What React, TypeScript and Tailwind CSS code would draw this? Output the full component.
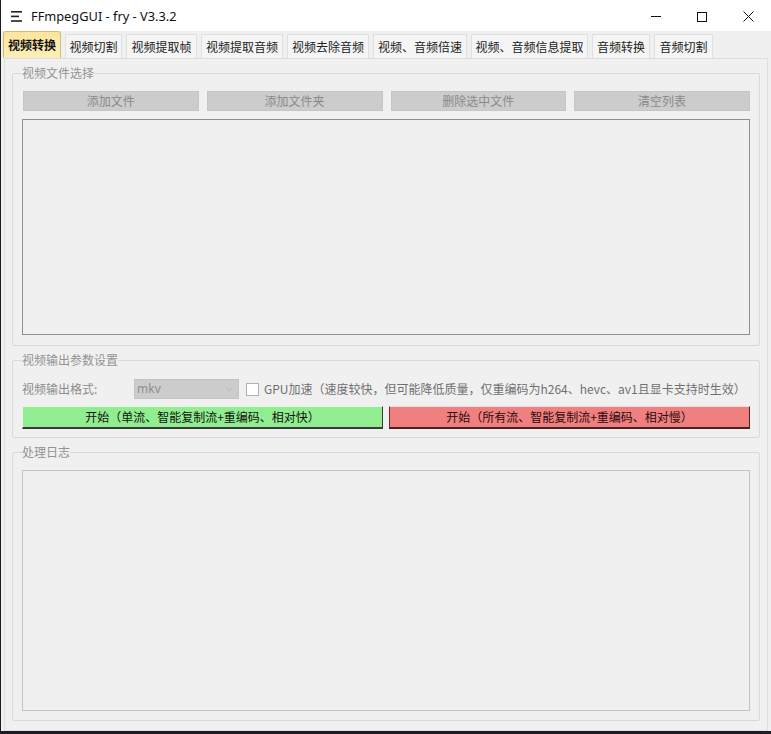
import { ChevronDown } from "lucide-react";

const tabs = [
    { name: "视频转换", w: "w-[58px]" },
    { name: "视频切割", w: "w-[57px]" },
    { name: "视频提取帧", w: "w-[71px]" },
    { name: "视频提取音频", w: "w-[82px]" },
    { name: "视频去除音频", w: "w-[82px]" },
    { name: "视频、音频倍速", w: "w-[94px]" },
    { name: "视频、音频信息提取", w: "w-[117px]" },
    { name: "音频转换", w: "w-[58px]" },
    { name: "音频切割", w: "w-[59px]" },
];

const fileButtons = ["添加文件", "添加文件夹", "删除选中文件", "清空列表"];

const GroupBox = ({ title, className, children }: { title: string; className?: string; children: React.ReactNode }) => (
    <fieldset className={`border border-[#d9d9d9] rounded-[2px] px-[9px] ${className ?? ""}`}>
        <legend className="px-0 text-[12px] leading-[14px] text-[#939393]">{title}</legend>
        {children}
    </fieldset>
);

const App = () => {
    return (
        <div
            className="w-[771px] h-[734px] bg-[#1b1d22] overflow-hidden"
            style={{ fontFamily: '"Noto Sans CJK SC", "Noto Sans", sans-serif' }}
        >
            <div className="ml-[1px] w-[770px] h-[731px] bg-[#f0f0f0] flex flex-col">
                {/* title bar */}
                <div className="h-[31px] bg-white flex items-center shrink-0 pt-[2px]">
                    <div className="w-[30px] flex justify-center pl-[2px]">
                        <svg width="13" height="11" viewBox="0 0 13 11">
                            <rect x="0" y="0" width="11" height="1.6" fill="#222" />
                            <rect x="0" y="4.6" width="8" height="1.6" fill="#222" />
                            <rect x="0" y="9.2" width="11" height="1.6" fill="#222" />
                        </svg>
                    </div>
                    <span className="text-[12.8px] text-[#111]" style={{ fontFamily: '"Noto Sans", sans-serif' }}>
                        FFmpegGUI - fry - V3.3.2
                    </span>
                    <div className="ml-auto flex items-center h-full">
                        <div className="w-[46px] h-full flex items-center justify-center">
                            <div className="w-[10px] h-px bg-[#111]" />
                        </div>
                        <div className="w-[46px] h-full flex items-center justify-center">
                            <div className="w-[10px] h-[10px] border border-[#111]" />
                        </div>
                        <div className="w-[46px] h-full flex items-center justify-center">
                            <svg width="11" height="11" viewBox="0 0 11 11">
                                <path d="M0.5 0.5 L10.5 10.5 M10.5 0.5 L0.5 10.5" stroke="#111" strokeWidth="1" />
                            </svg>
                        </div>
                    </div>
                </div>

                {/* tab strip */}
                <div className="flex items-end gap-[4px] pl-[2px] h-[27px] shrink-0">
                    {tabs.map((t, i) =>
                        i === 0 ? (
                            <div
                                key={t.name}
                                className={`${t.w} h-[27px] flex items-center justify-center rounded-t-[3px] border border-b-0 border-[#d2bc7c] bg-gradient-to-b from-[#fde59c] to-[#fdeeb9] text-[12px] font-bold text-[#111]`}
                            >
                                {t.name}
                            </div>
                        ) : (
                            <div
                                key={t.name}
                                className={`${t.w} h-[24px] flex items-center justify-center border border-b-0 border-[#e0e0e0] bg-[#f5f5f5] text-[12px] text-[#222]`}
                            >
                                {t.name}
                            </div>
                        )
                    )}
                </div>

                {/* tab page */}
                <div className="flex-1 mx-[3px] border border-[#dedede] bg-[#f0f0f0] flex flex-col gap-[7px] px-[7px] pt-[7px] pb-[9px]">
                    <GroupBox title="视频文件选择" className="pb-[10px]">
                        <div className="grid grid-cols-4 gap-[8px] mt-[11px] pl-[1px]">
                            {fileButtons.map((b) => (
                                <div
                                    key={b}
                                    className="h-[20px] bg-[#cccccc] border border-[#c6c6c6] flex items-center justify-center text-[12px] text-[#8a8a8a]"
                                >
                                    {b}
                                </div>
                            ))}
                        </div>
                        <div className="mt-[8px] h-[216px] border border-[#8f8f8f] bg-[#f0f0f0]" />
                    </GroupBox>

                    <GroupBox title="视频输出参数设置" className="pb-[8px]">
                        <div className="flex items-center h-[20px] mt-[12px] text-[12px] text-[#8c8c8c]">
                            <span className="w-[112px]">视频输出格式:</span>
                            <div className="w-[105px] h-[20px] bg-[#cccccc] border border-[#c3c3c3] flex items-center justify-between pl-[2px] pr-[3px]">
                                <span className="text-[12px] text-[#8e8e8e]" style={{ fontFamily: '"Noto Sans", sans-serif' }}>mkv</span>
                                <ChevronDown size={12} strokeWidth={1.2} color="#a9a9a9" />
                            </div>
                            <div className="ml-[7px] w-[13px] h-[13px] bg-white border border-[#b0b0b0]" />
                            <span className="ml-[5px] text-[#707070]">GPU加速（速度较快，但可能降低质量，仅重编码为h264、hevc、av1且显卡支持时生效）</span>
                        </div>
                        <div className="grid grid-cols-2 gap-[6px] mt-[7px]">
                            <div className="h-[23px] bg-[#90ee90] border border-[#e6f7e6] border-r-[#3a3a3a] border-b-[#3a3a3a] border-b-2 flex items-center justify-center text-[12px] text-[#111]">
                                开始（单流、智能复制流+重编码、相对快）
                            </div>
                            <div className="h-[23px] bg-[#f08080] border border-[#f7d9d9] border-r-[#4a2020] border-b-[#4a2020] border-l-[#6a3030] border-b-2 flex items-center justify-center text-[12px] text-[#2a0a0a]">
                                开始（所有流、智能复制流+重编码、相对慢）
                            </div>
                        </div>
                    </GroupBox>

                    <GroupBox title="处理日志" className="flex-1 flex flex-col pb-[9px]">
                        <div className="mt-[11px] flex-1 border border-[#c4c4c4] bg-[#f0f0f0]" />
                    </GroupBox>
                </div>
            </div>
        </div>
    );
};

export default App;
